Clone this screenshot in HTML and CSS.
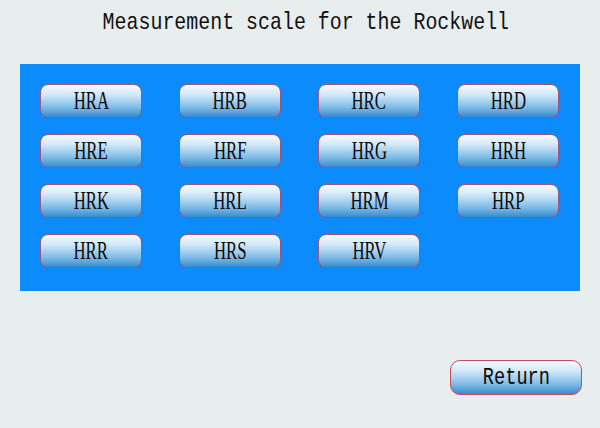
FILE: index.html
```html
<!DOCTYPE html>
<html lang="en">
<head>
  <meta charset="UTF-8" />
  <title>Rockwell scale</title>
  <link rel="stylesheet" href="styles.css">
</head>
<body>
  <div class="screen">
    <h1 class="title"><span>Measurement scale for the Rockwell</span></h1>

    <div class="panel">
      <button class="scale"><span>HRA</span></button>
      <button class="scale"><span>HRB</span></button>
      <button class="scale"><span>HRC</span></button>
      <button class="scale"><span>HRD</span></button>
      <button class="scale"><span>HRE</span></button>
      <button class="scale"><span>HRF</span></button>
      <button class="scale"><span>HRG</span></button>
      <button class="scale"><span>HRH</span></button>
      <button class="scale"><span>HRK</span></button>
      <button class="scale"><span>HRL</span></button>
      <button class="scale"><span>HRM</span></button>
      <button class="scale"><span>HRP</span></button>
      <button class="scale"><span>HRR</span></button>
      <button class="scale"><span>HRS</span></button>
      <button class="scale"><span>HRV</span></button>
    </div>

    <div class="footer">
      <button class="return"><span>Return</span></button>
    </div>
  </div>
</body>
</html>
```

FILE: styles.css
```css
html, body {
  margin: 0;
  padding: 0;
  background-color: #e8eded;
}
.screen {
  width: 600px;
  height: 428px;
  display: flex;
  flex-direction: column;
}
.title {
  margin: 0;
  height: 64px;
  box-sizing: border-box;
  padding: 8px 0 0 12px;
  text-align: center;
  font-family: "Liberation Mono", monospace;
  font-weight: normal;
  font-size: 24px;
  line-height: 30px;
  color: #111;
  white-space: nowrap;
}
.title span {
  display: inline-block;
  transform: scaleX(0.83);
}
.panel {
  margin: 0 20px;
  height: 227px;
  box-sizing: border-box;
  padding: 20px 21px 0 20px;
  background-color: #0c8bfd;
  display: grid;
  grid-template-columns: repeat(4, 102px);
  grid-auto-rows: 34px;
  row-gap: 16px;
  justify-content: space-between;
  align-content: start;
}
.scale, .return {
  border: 1px solid #a2547a;
  border-radius: 8px;
  background: linear-gradient(to bottom, #f6fbff 0%, #d2e8f8 30%, #7fbbe6 70%, #368cd0 100%);
  color: #0a0a0a;
  padding: 0;
  cursor: pointer;
}
.scale {
  font-family: "Liberation Serif", serif;
  font-size: 25px;
  line-height: 32px;
}
.scale span {
  display: inline-block;
  transform: scaleX(0.67);
}
.footer {
  display: flex;
  justify-content: flex-end;
  padding: 69px 18px 0 0;
}
.return {
  width: 132px;
  height: 35px;
  font-family: "Liberation Mono", monospace;
  font-size: 23px;
  line-height: 32px;
  border-color: #c84a5a;
  border-radius: 10px;
}
.return span {
  display: inline-block;
  transform: scaleX(0.81);
}
```
